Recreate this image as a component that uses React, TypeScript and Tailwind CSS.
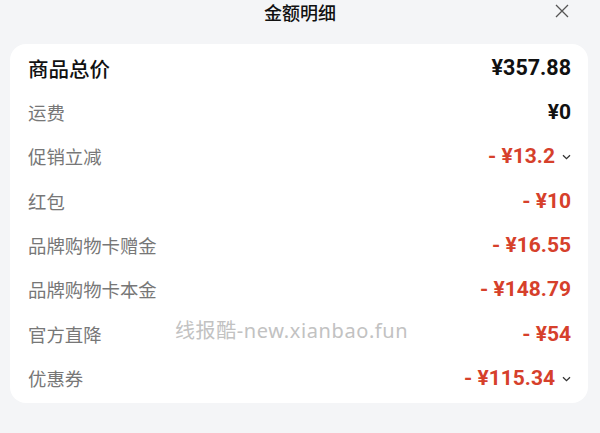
import { type ReactNode } from 'react'

type Row = {
  label: string
  value: string
  tone: 'black' | 'red'
  expandable?: boolean
}

const rows: Row[] = [
  { label: '运费', value: '¥0', tone: 'black' },
  { label: '促销立减', value: '- ¥13.2', tone: 'red', expandable: true },
  { label: '红包', value: '- ¥10', tone: 'red' },
  { label: '品牌购物卡赠金', value: '- ¥16.55', tone: 'red' },
  { label: '品牌购物卡本金', value: '- ¥148.79', tone: 'red' },
  { label: '官方直降', value: '- ¥54', tone: 'red' },
  { label: '优惠券', value: '- ¥115.34', tone: 'red', expandable: true },
]

function Chevron() {
  return (
    <svg width="9" height="6" viewBox="0 0 9 6" className="ml-[7px] shrink-0">
      <path d="M1 1.2 4.5 4.6 8 1.2" fill="none" stroke="#333" strokeWidth="1.3" />
    </svg>
  )
}

function Line({ left, right }: { left: ReactNode; right: ReactNode }) {
  return (
    <div className="flex h-[44.4px] items-center justify-between">
      {left}
      <div className="flex items-center">{right}</div>
    </div>
  )
}

export default function App() {
  return (
    <div className="h-[433px] w-[600px] overflow-hidden bg-[#f4f5f7] font-['Noto_Sans_CJK_SC',sans-serif]">
      {/* 标题栏 */}
      <div className="relative h-[44px] pt-[1px]">
        <div className="text-center text-[18px] font-medium leading-[22px] text-[#111]">金额明细</div>
        <svg
          width="14"
          height="14"
          viewBox="0 0 14 14"
          className="absolute left-[555px] top-[4px]"
        >
          <path d="M1 1 13 13M13 1 1 13" stroke="#555" strokeWidth="1.3" fill="none" />
        </svg>
      </div>

      {/* 明细卡片 */}
      <div className="relative ml-[10px] mr-[12px] rounded-[16px] bg-white pb-[2px] pl-[18px] pr-[17px] pt-[2px]">
        <Line
          left={<span className="text-[20.5px] font-medium text-[#111]">商品总价</span>}
          right={
            <span className="font-['Roboto','Noto_Sans_CJK_SC',sans-serif] text-[21.5px] font-bold text-[#111]">
              ¥357.88
            </span>
          }
        />
        {rows.map((r) => (
          <Line
            key={r.label}
            left={<span className="text-[18.4px] text-[#777]">{r.label}</span>}
            right={
              <>
                <span
                  className={
                    r.tone === 'red'
                      ? "font-['Roboto','Noto_Sans_CJK_SC',sans-serif] text-[21px] font-bold text-[#d6402b]"
                      : "font-['Roboto','Noto_Sans_CJK_SC',sans-serif] text-[21px] font-bold text-[#111]"
                  }
                >
                  {r.value}
                </span>
                {r.expandable && <Chevron />}
              </>
            }
          />
        ))}

        {/* 水印 */}
        <div className="pointer-events-none absolute left-[165px] top-[272px] whitespace-nowrap font-['Noto_Sans','Noto_Sans_CJK_SC',sans-serif] text-[20px] tracking-[0.6px] text-[#c2c2c2]">
          线报酷-new.xianbao.fun
        </div>
      </div>
    </div>
  )
}
